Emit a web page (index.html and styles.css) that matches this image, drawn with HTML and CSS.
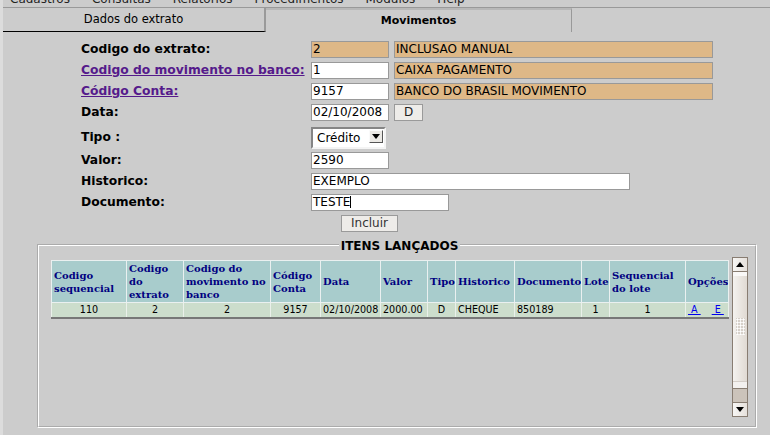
FILE: index.html
```html
<!DOCTYPE html>
<html lang="pt">
<head>
<meta charset="utf-8">
<title>Movimentos</title>
<link rel="stylesheet" href="styles.css">
</head>
<body>
<div class="frame">
  <div class="menubar">
    <div class="menu-inner">
      <span>Cadastros</span><span>Consultas</span><span>Relatorios</span><span>Procedimentos</span><span>Modulos</span><span>Help</span>
    </div>
  </div>
  <div class="tabs">
    <div class="tab">Dados do extrato</div>
    <div class="tab active">Movimentos</div>
    <div class="tab-rest"></div>
  </div>

  <div class="form">
    <div class="row">
      <span class="lbl">Codigo do extrato:</span>
      <span class="field tan w-s">2</span>
      <span class="field tan w-l gap">INCLUSAO MANUAL</span>
    </div>
    <div class="row">
      <a class="lbl link" href="#">Codigo do movimento no banco:</a>
      <span class="field w-s">1</span>
      <span class="field tan w-l gap">CAIXA PAGAMENTO</span>
    </div>
    <div class="row">
      <a class="lbl link" href="#">Código Conta:</a>
      <span class="field w-s">9157</span>
      <span class="field tan w-l gap">BANCO DO BRASIL MOVIMENTO</span>
    </div>
    <div class="row">
      <span class="lbl">Data:</span>
      <span class="field w-s">02/10/2008</span>
      <span class="btn btn-d gap">D</span>
    </div>
    <div class="row row-select">
      <span class="lbl">Tipo :</span>
      <span class="select"><span class="select-text">Crédito</span><span class="select-btn"><span class="tri-down"></span></span></span>
    </div>
    <div class="row">
      <span class="lbl">Valor:</span>
      <span class="field w-s">2590</span>
    </div>
    <div class="row">
      <span class="lbl">Historico:</span>
      <span class="field w-l">EXEMPLO</span>
    </div>
    <div class="row">
      <span class="lbl">Documento:</span>
      <span class="field w-m">TESTE<span class="caret"></span></span>
    </div>
    <div class="row row-btn">
      <span class="lbl"></span>
      <span class="btn btn-incluir">Incluir</span>
    </div>
  </div>

  <fieldset class="items">
    <legend>ITENS LANÇADOS</legend>
    <div class="scrollbox">
      <div class="tablewrap">
        <table class="grid">
          <colgroup>
            <col class="c1"><col class="c2"><col class="c3"><col class="c4"><col class="c5"><col class="c6">
            <col class="c7"><col class="c8"><col class="c9"><col class="c10"><col class="c11"><col class="c12">
          </colgroup>
          <thead>
            <tr>
              <th>Codigo sequencial</th>
              <th>Codigo do extrato</th>
              <th>Codigo do movimento no banco</th>
              <th>Código Conta</th>
              <th>Data</th>
              <th>Valor</th>
              <th>Tipo</th>
              <th>Historico</th>
              <th>Documento</th>
              <th>Lote</th>
              <th>Sequencial do lote</th>
              <th>Opções</th>
            </tr>
          </thead>
          <tbody>
            <tr>
              <td class="ctr">110</td>
              <td class="ctr">2</td>
              <td class="ctr">2</td>
              <td class="ctr">9157</td>
              <td>02/10/2008</td>
              <td>2000.00</td>
              <td class="ctr">D</td>
              <td>CHEQUE</td>
              <td>850189</td>
              <td class="ctr">1</td>
              <td class="ctr">1</td>
              <td class="opts"><a href="#">&nbsp;A&nbsp;</a><a href="#" class="opt-e">&nbsp;E&nbsp;</a></td>
            </tr>
          </tbody>
        </table>
      </div>
      <div class="vscroll">
        <div class="sb-btn"><span class="tri-up"></span></div>
        <div class="sb-thumb"><span class="grip"></span></div>
        <div class="sb-trough"></div>
        <div class="sb-btn sb-btn-down"><span class="tri-down"></span></div>
      </div>
    </div>
  </fieldset>
</div>
</body>
</html>
```
FILE: styles.css
```css
html, body {
  margin: 0;
  padding: 0;
}
body {
  background: #cccccc;
  font-family: "DejaVu Sans", "Noto Sans", sans-serif;
  font-size: 12px;
  color: #000;
  width: 770px;
  height: 435px;
  overflow: hidden;
}
.frame {
  border-left: 3px solid #dcdcdc;
  height: 435px;
  box-sizing: border-box;
}

/* top menu (scrolled off) */
.menubar {
  height: 7px;
  overflow: hidden;
  border-bottom: 1px solid #999999;
}
.menu-inner {
  display: flex;
  gap: 22px;
  margin-top: -8px;
  padding-left: 7px;
  line-height: 14px;
  color: #222;
}

/* tabs */
.tabs {
  display: flex;
  height: 24px;
}
.tab {
  box-sizing: border-box;
  width: 263px;
  height: 24px;
  border-bottom: 1px solid #000;
  border-right: 2px solid #9a9a9a;
  text-align: center;
  line-height: 23px;
  font-size: 11.5px;
}
.tab.active {
  width: 306px;
  border-bottom: none;
  border-top: 2px solid #b8b8b8;
  border-right: 1px solid #999;
  font-weight: bold;
  font-size: 11px;
  line-height: 22px;
}
.tab-rest {
  flex: 1;
}

/* form */
.form {
  margin-top: 9px;
  padding-left: 78px;
}
.row {
  display: flex;
  align-items: flex-start;
  height: 21px;
}
.row-btn {
  height: 17px;
}
.lbl {
  width: 230px;
  flex: none;
  font-weight: bold;
  line-height: 17px;
  font-size: 12.3px;
}
.lbl.link {
  color: #551a8b;
  text-decoration: underline;
}
.field {
  display: inline-block;
  box-sizing: border-box;
  height: 17px;
  border: 1px solid #999;
  background: #fff;
  padding: 0 1px;
  line-height: 15px;
  font-size: 12px;
  white-space: nowrap;
  overflow: hidden;
}
.tan { background: #deb887; }
.w-s { width: 78px; }
.w-m { width: 138px; }
.w-l { width: 319px; }
.gap { margin-left: 5px; }
.caret {
  display: inline-block;
  width: 1px;
  height: 12px;
  background: #000;
  vertical-align: -2px;
}
.btn {
  display: inline-block;
  box-sizing: border-box;
  height: 17px;
  border: 1px solid #9a9a9a;
  background: #eeece9;
  text-align: center;
  line-height: 15px;
  font-size: 12px;
  color: #222;
}
.btn-d { width: 29px; }
.btn-incluir {
  width: 57px;
  margin-left: 30px;
  color: #333;
}

/* select */
.row-select {
  height: 27px;
  padding-top: 2px;
  box-sizing: border-box;
}
.row-select .lbl { line-height: 21px; }
.select {
  display: flex;
  align-items: flex-start;
  box-sizing: border-box;
  width: 75px;
  height: 22px;
  border: 2px solid;
  border-color: #858585 #f4f4f4 #f4f4f4 #858585;
  background: #fff;
}
.select-text {
  flex: 1;
  padding-left: 4px;
  line-height: 18px;
  font-size: 12px;
}
.select-btn {
  display: flex;
  align-items: center;
  justify-content: center;
  box-sizing: border-box;
  width: 14px;
  height: 13px;
  margin: 1px 1px 0 0;
  background: #ebe9e5;
  border: 1px solid;
  border-color: #fafafa #555 #555 #fafafa;
}
.tri-down {
  width: 0;
  height: 0;
  border-left: 4px solid transparent;
  border-right: 4px solid transparent;
  border-top: 5px solid #000;
}
.tri-up {
  width: 0;
  height: 0;
  border-left: 4px solid transparent;
  border-right: 4px solid transparent;
  border-bottom: 5px solid #000;
}

/* fieldset */
.items {
  margin: 5px 13px 0 34px;
  padding: 4px 7px 9px 12px;
  border: 2px groove #ffffff;
  min-width: 0;
}
.items legend {
  margin: 0 auto;
  padding: 2px 2px 0;
  line-height: 14px;
  font-weight: bold;
  font-size: 12px;
}
.scrollbox {
  display: flex;
  height: 160px;
}
.tablewrap {
  width: 681px;
  padding-top: 3px;
  box-sizing: border-box;
}

/* table */
.grid {
  table-layout: fixed;
  width: 677px;
  border-collapse: collapse;
  border-left: 1px solid #eeeeee;
  border-top: 1px solid #eeeeee;
  border-right: 1px solid #b0b0b0;
  border-bottom: 2px solid #777777;
}
.c1 { width: 75px; }
.c2 { width: 57px; }
.c3 { width: 87px; }
.c4 { width: 50px; }
.c5 { width: 60px; }
.c6 { width: 47px; }
.c7 { width: 28px; }
.c8 { width: 59px; }
.c9 { width: 67px; }
.c10 { width: 28px; }
.c11 { width: 76px; }
.c12 { width: 43px; }
.grid th {
  background: #a8cccc;
  color: #000080;
  font-family: "DejaVu Serif", serif;
  font-weight: bold;
  font-size: 10px;
  line-height: 13px;
  text-align: left;
  vertical-align: middle;
  height: 41px;
  padding: 0 2px;
  border: 1px solid #eaf0f0;
  overflow: hidden;
}
.grid td {
  background: #ccddcc;
  font-size: 9.6px;
  line-height: 14px;
  height: 14px;
  padding: 0 2px;
  border: 1px solid #eaf0ea;
  white-space: nowrap;
  overflow: hidden;
}
.grid td.ctr { text-align: center; }
.opts a { color: #0000ee; text-decoration: underline; }
.opts .opt-e { margin-left: 11px; }

/* fake scrollbar */
.vscroll {
  display: flex;
  flex-direction: column;
  box-sizing: border-box;
  width: 16px;
  height: 160px;
  border: 1px solid #887d72;
  background: #cbc3ba;
}
.sb-btn {
  height: 13px;
  flex: none;
  display: flex;
  align-items: center;
  justify-content: center;
  background: linear-gradient(to right, #f7f6f4, #e6e1dc);
  border-bottom: 1px solid #887d72;
}
.sb-btn-down {
  border-bottom: none;
  border-top: 1px solid #887d72;
}
.sb-thumb {
  height: 117px;
  flex: none;
  display: flex;
  align-items: center;
  justify-content: center;
  box-sizing: border-box;
  border-top: 4px solid #f9f8f7;
  border-bottom: 1px solid #887d72;
  box-shadow: inset 0 -6px 0 #f3f1ef, inset 0 -7px 0 #d4cec8;
  background: linear-gradient(to right, #f4f2ef, #e0dad3);
}
.grip {
  width: 9px;
  height: 17px;
  margin-top: -12px;
  background: radial-gradient(circle, #ffffff 0.9px, #d6d0c9 1.3px) 0 0 / 3px 3px;
}
.sb-trough {
  flex: 1;
  background: #cbc3ba;
}
```
